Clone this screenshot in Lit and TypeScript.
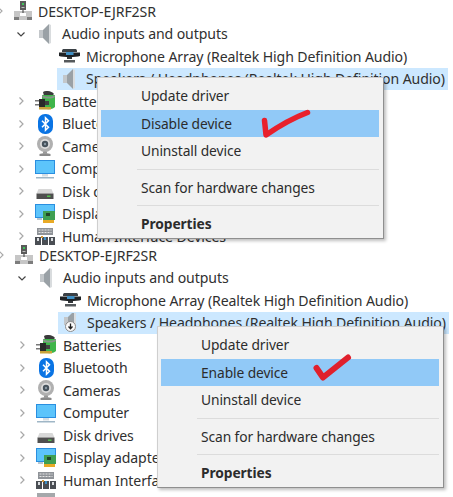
import { LitElement, html, css, svg } from "lit";
import { customElement, property } from "lit/decorators.js";

const speaker = svg`<path d="M4 6h4v8H4z" fill="#c3c7ca"/><path d="M8 6l6-6v20l-6-6z" fill="#9aa1a6"/><path d="M14 0l2 1v18l-2 1z" fill="#d9dcde"/>`;
const icons: Record<string, unknown> = {
  pc: svg`<path d="M7 0h6v9H7z" fill="#5a5a5a"/><path d="M9 2h2v2H9z" fill="#3fc45a"/><path d="M8.500 6h3v1h-3z" fill="#bdbdbd"/><path d="M1 10h18v9H1z" fill="#c6c6c6"/><path d="M7 12h6v3H7z" fill="#fff"/><path d="M1 16h5v3H1zM14 16h5v3h-5z" fill="#7d7d7d"/><path d="M9.500 9h1v3h-1z" fill="#3a3a3a"/>`,
  speaker,
  mic: svg`<path d="M3 4.500c0-1 1-1.500 2-1.500h11c1 0 2 .5 2 1.500V6H3z" fill="#3a4045"/><path d="M0 6.500h21v3.500c-4 1.500-17 1.500-21 0z" fill="#1f2225"/><path d="M7 6h7.500v3H7z" fill="#3f8fc4"/><path d="M8 11h5v2H8z" fill="#33373a"/><path d="M5 14h11v2.500H5z" fill="#55595c"/>`,
  spkoff: svg`<g transform="translate(0 -2)">${speaker}</g><circle cx="10.500" cy="13.500" r="5" fill="#fafafa" stroke="#8c8c8c"/><path d="M10.500 10.500v5M8.500 13.500l2 2.300 2-2.300" fill="none" stroke="#222" stroke-width="1.300"/>`,
  battery: svg`<path d="M8 1c3-2 9-1 11 2l-2 2H9z" fill="#3a3a3a"/><path d="M7 4h13v12c-3 3-10 3-13 0z" fill="#3fb54a"/><path d="M7 4c3 2 10 2 13 0v2c-3 2-10 2-13 0z" fill="#88958b"/><path d="M0 9h5v1.500H0zM0 13h5v1.500H0z" fill="#777"/><path d="M4 8h6v8H4z" fill="#2a2a2a"/><path d="M10 10h4v4h-4z" fill="#404040"/><path d="M4 16h12v2.500H4z" fill="#c8a33a"/>`,
  bluetooth: svg`<rect x="3" y="0" width="15" height="20" rx="7" fill="#0a74e4"/><path d="M7 6.700l6.500 6.600-3 3V3.700l3 3-6.500 6.600" fill="none" stroke="#fff" stroke-width="1.500"/>`,
  camera: svg`<circle cx="10" cy="8" r="8" fill="#b0b0b0"/><circle cx="10" cy="8" r="5" fill="#dcdcdc"/><circle cx="10" cy="8" r="3.200" fill="#46525c"/><circle cx="10" cy="8" r="1.200" fill="#8a98a4"/><path d="M8 15.500h4v2H8z" fill="#999"/><path d="M4.500 18c2-1 9-1 11 0v2h-11z" fill="#8a8a8a"/>`,
  monitor: svg`<path d="M0 1h20v14H0z" fill="#2a8fe0"/><path d="M1 2h18v12H1z" fill="#5cc4fb"/><path d="M7 15h6v2.500H7z" fill="#d5dde2"/><path d="M1 18h18v1.500H1z" fill="#9fb6c6"/>`,
  disk: svg`<path d="M3.500 8h13l2 4.500H1.500z" fill="#d8d8d8"/><path d="M1.500 12.500h17V18h-17z" fill="#4f4f4f"/><path d="M12 14.500h3.500v1.500H12z" fill="#54c24e"/>`,
  adapter: svg`<path d="M0 0h20v14H0z" fill="#2a8fe0"/><path d="M1 1h18v12H1z" fill="#5cc4fb"/><path d="M8 7h12v9H8z" fill="#3f9f52"/><path d="M11 9h4v3h-4z" fill="#20452a"/><path d="M8 16h11v3H8z" fill="#e8aa26"/><path d="M2 14h5v2H2z" fill="#b9c6cf"/>`,
  hid: svg`<path d="M2 2h16v7H2z" fill="#8f9398"/><path d="M3.500 4h13M3.500 6.500h13" fill="none" stroke="#e6e6e6" stroke-width="1.200" stroke-dasharray="2 1"/><path d="M0 11h6v8H0zM7 11h6v8H7zM14 11h6v8h-6z" fill="#4a4e54"/><path d="M2 12h2v3H2z" fill="#d9dcdf"/><path d="M9 11h2v3H9z" fill="#3f8fc4"/><path d="M16 12h2v3h-2z" fill="#d9dcdf"/><path d="M6 10h2v2H6z" fill="#d59a3a"/>`,
  ide: svg`<path d="M1 0h18v6H1z" fill="#a5a8ab"/>`,
};

type Row = { level: 0 | 1 | 2; icon: string; label: string; chevron?: "right" | "down" | "root"; selected?: boolean };

const rows = (selected: string): Row[] => [
  { level: 0, icon: "pc", label: "DESKTOP-EJRF2SR", chevron: "root" },
  { level: 1, icon: "speaker", label: "Audio inputs and outputs", chevron: "down" },
  { level: 2, icon: "mic", label: "Microphone Array (Realtek High Definition Audio)" },
  { level: 2, icon: selected, label: "Speakers / Headphones (Realtek High Definition Audio)", selected: true },
  { level: 1, icon: "battery", label: "Batteries", chevron: "right" },
  { level: 1, icon: "bluetooth", label: "Bluetooth", chevron: "right" },
  { level: 1, icon: "camera", label: "Cameras", chevron: "right" },
  { level: 1, icon: "monitor", label: "Computer", chevron: "right" },
  { level: 1, icon: "disk", label: "Disk drives", chevron: "right" },
  { level: 1, icon: "adapter", label: "Display adapters", chevron: "right" },
  { level: 1, icon: "hid", label: "Human Interface Devices", chevron: "right" },
];

@customElement("device-panel")
class DevicePanel extends LitElement {
  @property() variant: "disable" | "enable" = "disable";

  static styles = css`
    :host { display: block; position: relative; height: 244px; }
    :host(.second) { height: 253px; margin-left: 1px; }
    .row { height: 22.5px; display: flex; align-items: center; position: relative; white-space: nowrap; }
    .row.l0 { padding-left: 13px; }
    .row.l1 { padding-left: 35px; }
    .row.l2 { padding-left: 57px; }
    .sel { display: flex; align-items: center; align-self: stretch; width: 391px; }
    .row.selected .sel { background: #cce8ff; }
    .ic { width: 21px; height: 20px; flex: none; margin-right: 4px; }
    .l1 .ic { margin-right: 6px; }
    .l2 .ic { margin-left: 2px; margin-right: 6px; }
    .lbl { font: 14.1px "Noto Sans", sans-serif; color: #303030; letter-spacing: -0.1px; }
    .chev { position: absolute; top: 50%; margin-top: -5px; width: 10px; height: 10px; }
    .chev.root { left: -5px; }
    .chev.other { left: 16px; }
    .menu {
      position: absolute; left: 97px; top: 77px; width: 287px; height: 162px; box-sizing: border-box;
      padding: 4px 4px 4px 3px; background: #f2f2f2; border: 1px solid #cfcfcf; border-right-color: #8f8f8f; border-bottom-color: #8f8f8f;
      box-shadow: 2px 2px 3px rgba(0, 0, 0, 0.25);
      display: flex; flex-direction: column;
    }
    .item { height: 27.5px; flex: none; display: flex; align-items: center; padding-left: 40px; font: 13.8px "Noto Sans", sans-serif; color: #2c2c2c; letter-spacing: -0.1px; }
    .item.hi { background: #91c9f7; }
    .item.bold { font-weight: 700; }
    .sep { height: 1px; flex: none; background: #dcdcdc; margin: 4px 0 4px 36px; }
    .menu.enable { left: 156px; top: 82px; }
    .mark { position: absolute; left: 0; top: 0; width: 453px; height: 253px; pointer-events: none; }
  `;

  render() {
    const enable = this.variant === "enable";
    const data = rows(enable ? "spkoff" : "speaker");
    return html`
      ${data.map((r) => html`
        <div class="row l${r.level} ${r.selected ? "selected" : ""}">
          ${r.chevron ? html`<svg class="chev ${r.chevron === "root" ? "root" : "other"}" viewBox="0 0 10 10">
            <path d="${r.chevron === "down" ? "M1.500 3.500L5 7l3.500-3.500" : "M3.500 1.500L7 5 3.500 8.500"}" fill="none" stroke="${r.chevron === "down" ? "#444" : "#a8a8a8"}" stroke-width="1.200"/>
          </svg>` : ""}
          ${r.selected
            ? html`<div class="sel"><svg class="ic" viewBox="0 0 21 20">${icons[r.icon]}</svg><span class="lbl">${r.label}</span></div>`
            : html`<svg class="ic" viewBox="0 0 21 20">${icons[r.icon]}</svg><span class="lbl">${r.label}</span>`}
        </div>`)}
      ${enable ? html`<div class="row l1"><svg class="ic" viewBox="0 0 21 20">${icons.ide}</svg></div>` : ""}
      <div class="menu ${enable ? "enable" : ""}">
        <div class="item">Update driver</div>
        <div class="item hi">${enable ? "Enable device" : "Disable device"}</div>
        <div class="item">Uninstall device</div>
        <div class="sep"></div>
        <div class="item">Scan for hardware changes</div>
        <div class="sep"></div>
        <div class="item bold">Properties</div>
      </div>
      <svg class="mark" viewBox="0 0 453 253">
        ${enable
          ? svg`<path d="M315.500 124L322 133.500L347 113.500" fill="none" stroke="#e0202c" stroke-width="6" stroke-linecap="round" stroke-linejoin="round"/>`
          : svg`<path d="M264.500 120.500L266 135C279 126 293 118 307.500 112.500" fill="none" stroke="#e8202c" stroke-width="5.500" stroke-linecap="round" stroke-linejoin="round"/>`}
      </svg>
    `;
  }
}

@customElement("app-root")
export class AppRoot extends LitElement {
  static styles = css`
    :host { display: block; width: 453px; height: 497px; overflow: hidden; background: #fff; }
  `;
  render() {
    return html`
      <device-panel variant="disable"></device-panel>
      <device-panel class="second" variant="enable"></device-panel>
    `;
  }
}
void DevicePanel;
